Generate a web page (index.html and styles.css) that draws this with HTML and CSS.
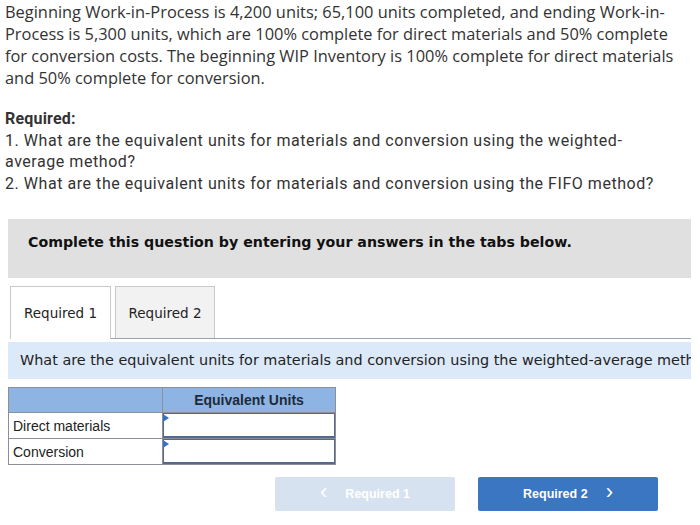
FILE: index.html
```html
<!DOCTYPE html>
<html>
<head>
<meta charset="utf-8">
<link rel="stylesheet" href="styles.css">
</head>
<body>
<div class="page">
  <p class="intro">Beginning Work-in-Process is 4,200 units; 65,100 units completed, and ending Work-in-Process is 5,300 units, which are 100% complete for direct materials and 50% complete for conversion costs. The beginning WIP Inventory is 100% complete for direct materials and 50% complete for conversion.</p>
  <div class="required">
    <div class="req-title">Required:</div>
    <div>1. What are the equivalent units for materials and conversion using the weighted-<br>average method?</div>
    <div>2. What are the equivalent units for materials and conversion using the FIFO method?</div>
  </div>
  <div class="notice">Complete this question by entering your answers in the tabs below.</div>
  <div class="tabs">
    <div class="tab active">Required 1</div>
    <div class="tab">Required 2</div>
  </div>
  <div class="prompt">What are the equivalent units for materials and conversion using the weighted-average method?</div>
  <table class="grid">
    <tr class="head"><th class="blank"></th><th>Equivalent Units</th></tr>
    <tr><td class="label">Direct materials</td><td class="inp"><div class="field"></div></td></tr>
    <tr><td class="label">Conversion</td><td class="inp"><div class="field"></div></td></tr>
  </table>
  <div class="nav">
    <div class="btn prev"><span class="chev">&lsaquo;</span>Required 1</div>
    <div class="btn next">Required 2<span class="chev">&rsaquo;</span></div>
  </div>
</div>
</body>
</html>
```
FILE: styles.css
```css
html, body { margin: 0; padding: 0; background: #fff; }
.page { width: 700px; overflow: hidden; }
.intro {
  margin: 0;
  padding: 1px 16px 0 5px;
  font-family: "Open Sans", sans-serif;
  font-size: 16.4px;
  line-height: 22px;
  color: #333;
}
.required {
  margin-top: 19px;
  padding-left: 5px;
  font-family: Roboto, sans-serif;
  font-size: 16px;
  letter-spacing: 0.55px;
  line-height: 21.5px;
  color: #333;
}
.req-title { font-weight: bold; letter-spacing: 0.2px; }
.notice {
  margin: 25px 9px 0 8px;
  height: 59px;
  background: #e0e0e0;
  box-sizing: border-box;
  padding: 15px 0 0 20px;
  font-family: "DejaVu Sans", sans-serif;
  font-weight: bold;
  font-size: 14.2px;
  color: #111;
}
.tabs {
  display: flex;
  gap: 4px;
  margin: 8px 9px 0 10px;
  border-bottom: 1px solid #9aa3b2;
  height: 52px;
}
.tab {
  width: 100px;
  height: 52px;
  box-sizing: border-box;
  border: 1px solid #c9c9c9;
  border-bottom: none;
  background: #f2f2f2;
  display: flex;
  align-items: center;
  justify-content: center;
  font-family: "DejaVu Sans", sans-serif;
  font-size: 13.5px;
  color: #222;
}
.tab.active { background: #fff; height: 53px; margin-bottom: -1px; width: 101px; }
.prompt {
  margin: 3px 9px 0 8px;
  height: 37px;
  background: #dce9f8;
  box-sizing: border-box;
  padding: 10px 0 0 12px;
  white-space: nowrap;
  overflow: hidden;
  font-family: "DejaVu Sans", sans-serif;
  font-size: 14.4px;
  color: #222;
}
.grid {
  margin: 8px 0 0 8px;
  border-collapse: collapse;
  font-family: "Liberation Sans", Arial, sans-serif;
  font-size: 14px;
  color: #222;
}
.grid th, .grid td { border: 1px solid #8b8f99; padding: 0; }
.head th {
  background: #8db4e3;
  height: 25px;
  font-size: 14px;
  font-weight: bold;
  color: #1f2a3a;
  vertical-align: top;
  padding-top: 4px;
  box-sizing: border-box;
}
.head th.blank { width: 154px; }
.head th + th { width: 173px; }
.label { height: 25px; padding-left: 4px !important; }
.inp { position: relative; padding: 0; background: #fff; }
.field {
  height: 22px;
  border: 1px solid #56698a;
  border-width: 1px 1px 2px 1px;
  margin: 0;
  background: #fff;
}
.inp::before {
  content: "";
  position: absolute;
  left: 0;
  top: 1px;
  border-left: 6px solid #3b6fc4;
  border-top: 4px solid transparent;
  border-bottom: 4px solid transparent;
}
.nav {
  display: flex;
  gap: 23px;
  margin: 12px 0 0 275px;
}
.btn {
  width: 180px;
  height: 34px;
  border-radius: 2px;
  display: flex;
  align-items: center;
  justify-content: center;
  font-family: "Liberation Sans", Arial, sans-serif;
  font-weight: bold;
  font-size: 12.5px;
  color: #fff;
}
.btn.prev { background: #d7e2f0; }
.btn.next { background: #3a76c1; }
.chev { font-size: 22px; font-weight: normal; line-height: 1; position: relative; top: -2px; }
.prev .chev { margin-right: 18px; }
.next .chev { margin-left: 18px; }
```
